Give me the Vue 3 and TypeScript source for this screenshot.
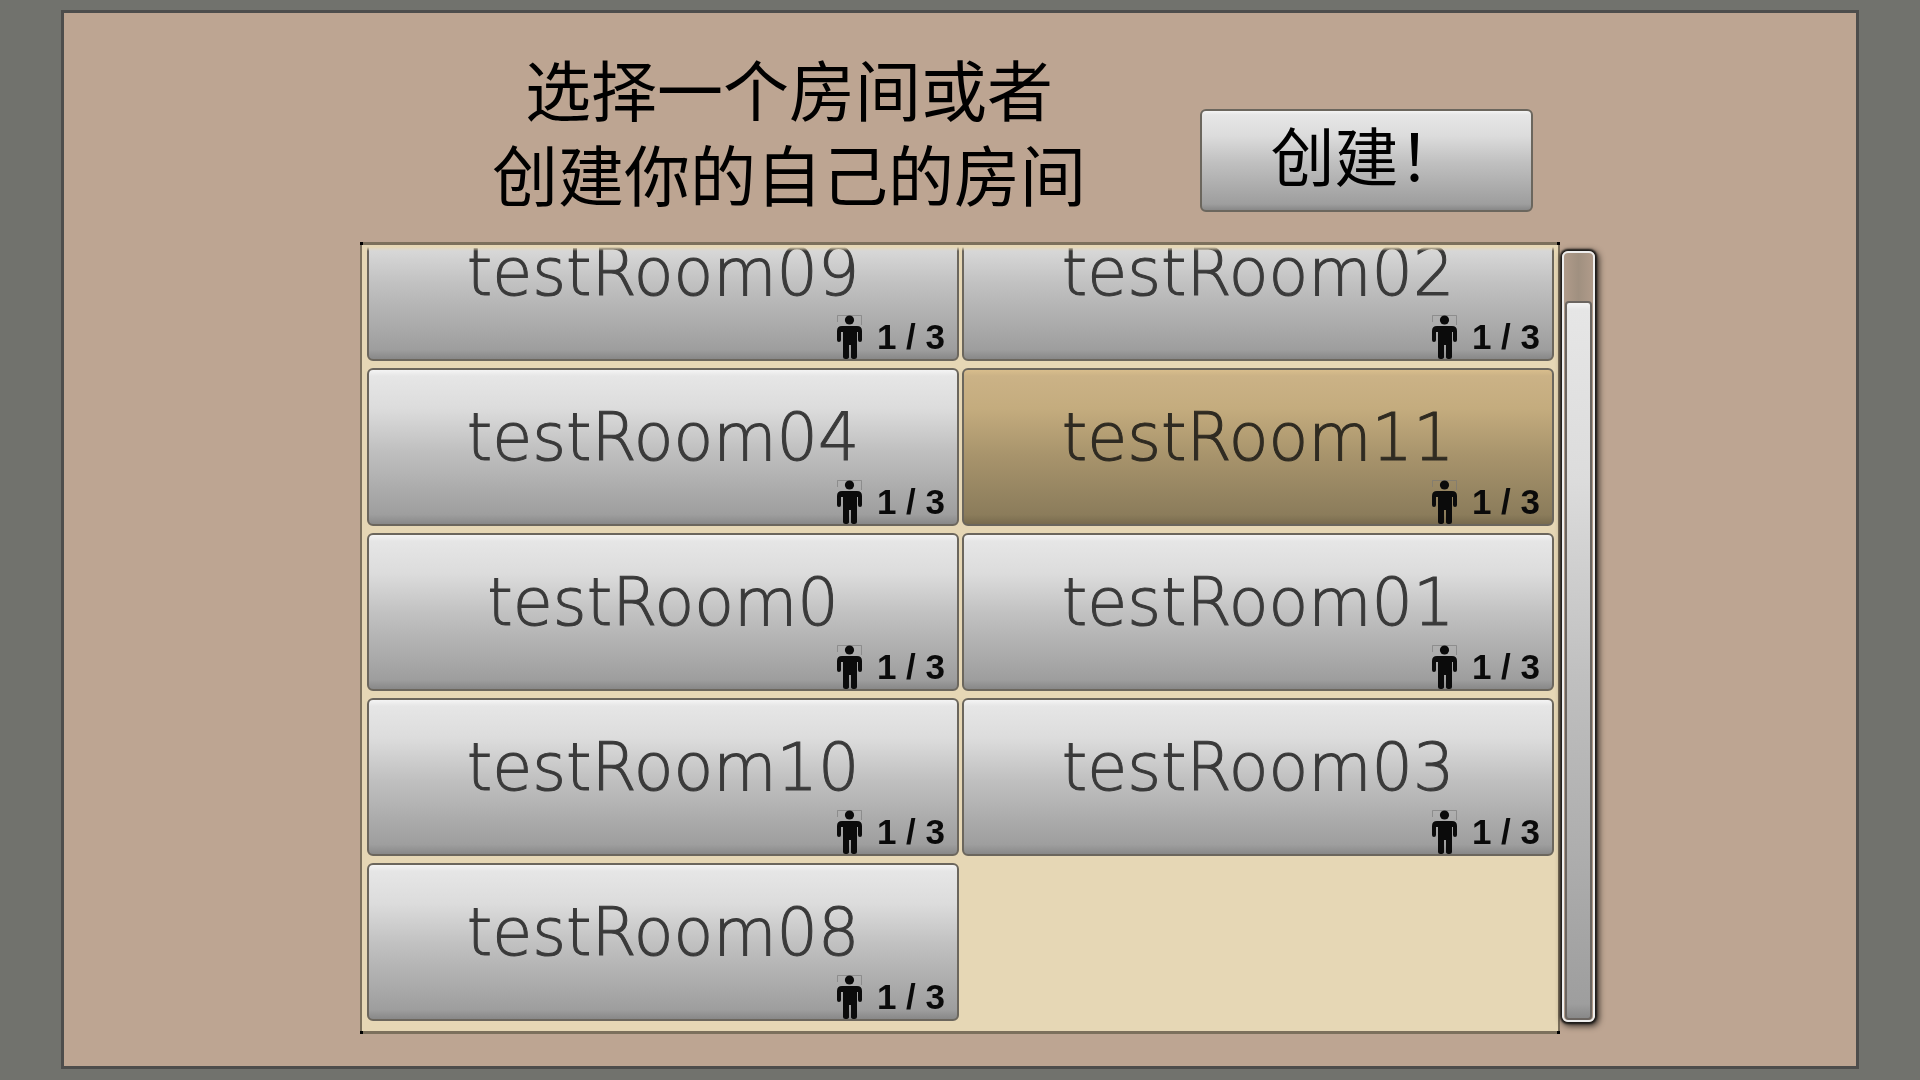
<script setup lang="ts">
import { ref } from 'vue'

interface Room {
  name: string
  players: number
  capacity: number
}

const names: string[] = [
  'testRoom09', 'testRoom02', 'testRoom04', 'testRoom11', 'testRoom0',
  'testRoom01', 'testRoom10', 'testRoom03', 'testRoom08',
]
const rooms: Room[] = names.map((name) => ({ name, players: 1, capacity: 3 }))
const selected = ref<string>('testRoom11')
const thumbHeight = ref<number>(93.8)
</script>

<template>
  <div class="stage">
    <main class="panel">
      <header class="header">
        <h1 class="title">选择一个房间或者<br />创建你的自己的房间</h1>
        <button type="button" class="create">创建！</button>
      </header>
      <div class="browser">
        <section class="list">
          <div class="viewport">
            <div class="rooms">
              <button
                v-for="room in rooms"
                :key="room.name"
                type="button"
                class="room"
                :class="{ active: room.name === selected }"
                @click="selected = room.name"
              >
                <span class="name">{{ room.name }}</span>
                <span class="players">
                  <svg class="person" viewBox="0 0 25 44" width="25" height="44" aria-hidden="true">
                    <path class="frame" d="M0.5 7V0.5H24.5V10" />
                    <circle cx="12.500" cy="5" r="4.600" />
                    <path d="M5 11H20Q25 11 25 16V25Q25 27 23 27T21 25V17H20V42Q20 44 17.500 44Q14 44 14 42V30H12V42Q12 44 8.500 44Q6 44 6 42V17H4V25Q4 27 2 27T0 25V16Q0 11 5 11Z" />
                  </svg>
                  <span>{{ room.players }} / {{ room.capacity }}</span>
                </span>
              </button>
            </div>
          </div>
        </section>
        <div class="scrollbar">
          <div class="thumb" :style="{ height: thumbHeight + '%' }"></div>
        </div>
      </div>
    </main>
  </div>
</template>

<style>
body {
  background: #71726d;
}
</style>

<style scoped>
.stage {
  box-sizing: border-box;
  display: flex;
  min-height: 100vh;
  padding: 10px 61px 11px;
  background: #71726d;
  font-family: "Noto Sans CJK SC", sans-serif;
}
.panel {
  box-sizing: border-box;
  flex: 1;
  display: flex;
  flex-direction: column;
  padding: 32px 0;
  border: 3px solid #4d4d4c;
  background: #bda592;
}
.header {
  box-sizing: border-box;
  display: flex;
  align-items: flex-end;
  width: 100%;
  max-width: 1200px;
  margin: 0 auto 27px;
  padding: 0 27px 0 18px;
}
.title {
  flex: 1;
  margin: 0;
  font-size: 66px;
  line-height: 85px;
  font-weight: 400;
  text-align: center;
  color: #000;
}
.create,
.room {
  box-sizing: border-box;
  border: 2px solid #6b665d;
  border-radius: 6px;
  background: linear-gradient(#f4f4f4, #e6e6e6 4%, #dcdcdc 25%, #c0c0c0 52%, #9e9e9e 94%, #888 100%);
  cursor: pointer;
}
.create {
  width: 333px;
  height: 103px;
  margin: 0 0 3px;
  padding: 0 0 16px;
  font-family: inherit;
  font-size: 64px;
  line-height: 80px;
  color: #000;
}
.browser {
  flex: 1;
  display: grid;
  grid-template-columns: 1fr minmax(0, 1200px) 1fr;
}
.list {
  grid-column: 2;
  box-sizing: border-box;
  display: flex;
  padding: 5px 6px 13px 7px;
  background:
    linear-gradient(#000, #000) 0 0 / 3px 3px no-repeat,
    linear-gradient(#000, #000) 100% 0 / 3px 3px no-repeat,
    linear-gradient(#000, #000) 0 100% / 3px 3px no-repeat,
    linear-gradient(#000, #000) 100% 100% / 3px 3px no-repeat,
    linear-gradient(#7c705c, #7c705c) 0 0 / 100% 3px no-repeat,
    linear-gradient(#7c705c, #7c705c) 0 100% / 100% 3px no-repeat,
    linear-gradient(#7c705c, #7c705c) 0 0 / 2px 100% no-repeat,
    linear-gradient(#7c705c, #7c705c) 100% 0 / 2px 100% no-repeat,
    #e6d7b5;
}
.viewport {
  flex: 1;
  display: flex;
  flex-direction: column;
  justify-content: flex-end;
  height: 774px;
  overflow: hidden;
  mask-image: linear-gradient(transparent, #000 4px);
}
.rooms {
  display: grid;
  grid-template-columns: 1fr 1fr;
  gap: 7px 3px;
}
.room {
  display: flex;
  flex-direction: column;
  height: 158px;
  padding: 26px 12px 0;
}
.room.active {
  background: linear-gradient(#d8bd8c, #cbb286 4%, #c4ac7e 25%, #a8946c 55%, #8b7c5b 94%, #786b4e 100%);
}
.name {
  align-self: center;
  font-family: "DejaVu Sans Light", "DejaVu Sans", sans-serif;
  font-size: 65px;
  line-height: 84px;
  font-weight: 200;
  color: #3a3a3a;
  -webkit-text-stroke: 1px #3a3a3a;
}
.room.active .name {
  color: #2f2b22;
  -webkit-text-stroke-color: #2f2b22;
}
.players {
  display: flex;
  align-items: center;
  justify-content: flex-end;
  gap: 15px;
  font: bold 35px/44px "Liberation Sans", sans-serif;
  color: #0a0a0a;
}
.person {
  fill: #0b0b0b;
}
.frame {
  fill: none;
  stroke: #777;
  stroke-opacity: 0.6;
}
.scrollbar {
  box-sizing: border-box;
  display: flex;
  align-items: flex-end;
  width: 33px;
  margin: 9px 0 12px 2px;
  padding: 0 1px;
  border: 2px solid #eee;
  border-radius: 6px;
  background: linear-gradient(90deg, #b09b8a, #a09080 50%, #b09b8a);
  box-shadow: 0 0 2px 2px #1c1a18, 2px 2px 6px 2px #3a322c;
}
.thumb {
  box-sizing: border-box;
  width: 100%;
  border: 2px solid #6b6560;
  border-radius: 4px;
  background: linear-gradient(#f4f4f4, #e6e6e6 1%, #dcdcdc 25%, #c0c0c0 52%, #9e9e9e 98%, #888 100%);
}
</style>
